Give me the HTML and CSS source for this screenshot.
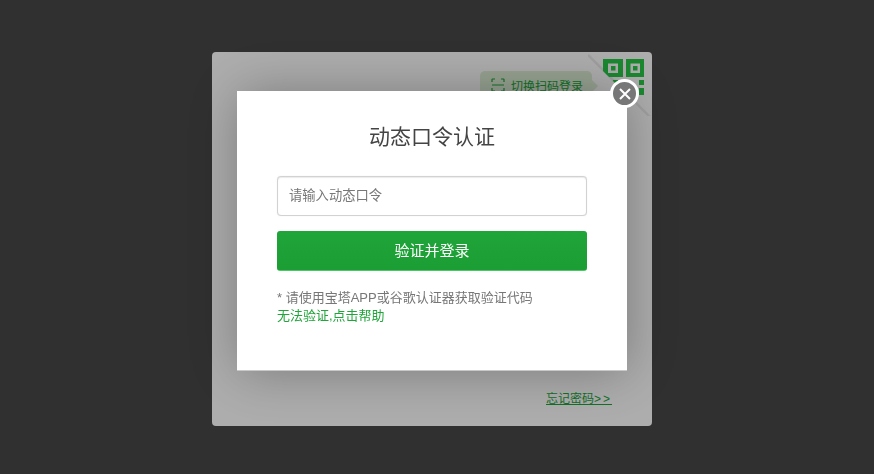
FILE: index.html
```html
<!DOCTYPE html>
<html lang="zh-CN">
<head>
<meta charset="utf-8">
<title>动态口令认证</title>
<link rel="stylesheet" href="styles.css">
</head>
<body>
<main class="card">
  <div class="scan-tip">
    <svg class="scan-icon" width="14" height="14" viewBox="0 0 14 14" fill="none" stroke="currentColor" stroke-width="1.2">
      <path d="M1 4V1.600Q1 1 1.600 1H4M10 1h2.400q.6 0 .6.6V4M13 10v2.400q0 .6-.6.6H10M4 13H1.600Q1 13 1 12.400V10M1 7h12"/>
    </svg>
    <span>切换扫码登录</span>
  </div>
  <svg class="corner" width="64" height="64" viewBox="0 0 64 64">
    <defs>
      <clipPath id="fold-clip"><path d="M0 0H64V68L0 4Z"/></clipPath>
    </defs>
    <path class="fold" d="M0 3L64 67"/>
    <path class="qr-mark" clip-path="url(#fold-clip)" fill-rule="evenodd" d="M15 7h20v18H15ZM20 11.500v9.500h10V11.500ZM23 14h4.500v4.500H23ZM38 7h18v18H38ZM42.500 11.500v9.500h9.500V11.500ZM45 14h4.500v4.500H45ZM25 28h5v4h-5ZM51 28h5v5h-5ZM51 36h5v7h-5Z"/>
  </svg>
  <a class="forgot" href="#">忘记密码<span class="forgot-arrows">&gt;&gt;</span></a>
</main>
<div class="shade"></div>
<section class="dialog">
  <h1 class="dialog-title">动态口令认证</h1>
  <input class="code-input" type="text" placeholder="请输入动态口令">
  <button class="submit" type="button">验证并登录</button>
  <p class="note">* 请使用宝塔APP或谷歌认证器获取验证代码<br><a class="help" href="#">无法验证,点击帮助</a></p>
  <button class="close" type="button" aria-label="关闭">
    <svg width="14" height="14" viewBox="0 0 14 14"><path d="M2 2L12 12M12 2L2 12" stroke="#fff" stroke-width="2"/></svg>
  </button>
</section>
</body>
</html>
```
FILE: styles.css
```css
* { box-sizing: border-box; }
html, body { height: 100%; }
body {
  margin: 0;
  background: #474747;
  font-family: "Liberation Sans", "Noto Sans CJK SC", sans-serif;
  overflow: hidden;
  padding: 52px 222px 48px 212px;
}
.card {
  position: relative;
  width: 440px;
  height: 374px;
  background: #fff;
  border-radius: 4px;
  overflow: hidden;
}
.scan-tip {
  position: absolute;
  left: 268px;
  top: 19px;
  width: 112px;
  height: 30px;
  padding: 0 0 2px 11px;
  display: flex;
  align-items: center;
  gap: 6px;
  background: #dff0d8;
  border-radius: 5px;
  color: #20a53a;
  font-size: 12px;
}
.scan-tip::after {
  content: "";
  position: absolute;
  left: 100%;
  top: 9px;
  border: 6px solid transparent;
  border-left-color: #dff0d8;
  border-right-width: 0;
}
.scan-icon { flex: none; }
.corner { position: absolute; right: 0; top: 0; display: block; }
.fold { fill: none; stroke: #ececec; stroke-width: 2.500; }
.qr-mark { fill: #28c947; }
.forgot {
  position: absolute;
  left: 334px;
  top: 337px;
  font-size: 12px;
  color: #20a53a;
}
.forgot-arrows { letter-spacing: 2px; }
.shade {
  position: fixed;
  inset: 0;
  background: rgba(0, 0, 0, .32);
}
.dialog {
  position: fixed;
  left: 237px;
  top: 91px;
  width: 390px;
  height: 280px;
  padding: 31px 40px 0;
  background: #fff;
  border-bottom: 1px solid #c8c8c8;
  box-shadow: 1px 1px 50px rgba(0, 0, 0, .3);
}
.dialog-title {
  margin: 0 0 24px;
  font-size: 21px;
  font-weight: 400;
  line-height: 30px;
  text-align: center;
  color: #444;
}
.code-input {
  display: block;
  width: 100%;
  height: 40px;
  padding: 0 11px 1px;
  border: 1px solid #d2d2d2;
  border-radius: 4px;
  box-shadow: inset 0 1px 1px rgba(0, 0, 0, .08), 0 0 1px rgba(0, 0, 0, .15);
  font: 13.300px "Liberation Sans", "Noto Sans CJK SC", sans-serif;
  color: #555;
  outline: 0;
}
.code-input::placeholder { color: #777; opacity: 1; }
.submit {
  display: block;
  width: 100%;
  height: 40px;
  margin-top: 15px;
  padding: 0 0 2px;
  border: 0;
  border-bottom: 1px solid #4bc765;
  border-radius: 3px;
  background: linear-gradient(#20a53a, #1b9e33);
  color: #fff;
  font: 15px "Liberation Sans", "Noto Sans CJK SC", sans-serif;
}
.note {
  margin: 18px 0 0;
  font-size: 13px;
  line-height: 18px;
  color: #777;
}
.help { color: #20a53a; text-decoration: none; }
.close {
  position: absolute;
  right: -12px;
  top: -12px;
  width: 29px;
  height: 29px;
  padding: 0;
  display: flex;
  align-items: center;
  justify-content: center;
  border: 3px solid #fff;
  border-radius: 50%;
  background: #777;
}
```
